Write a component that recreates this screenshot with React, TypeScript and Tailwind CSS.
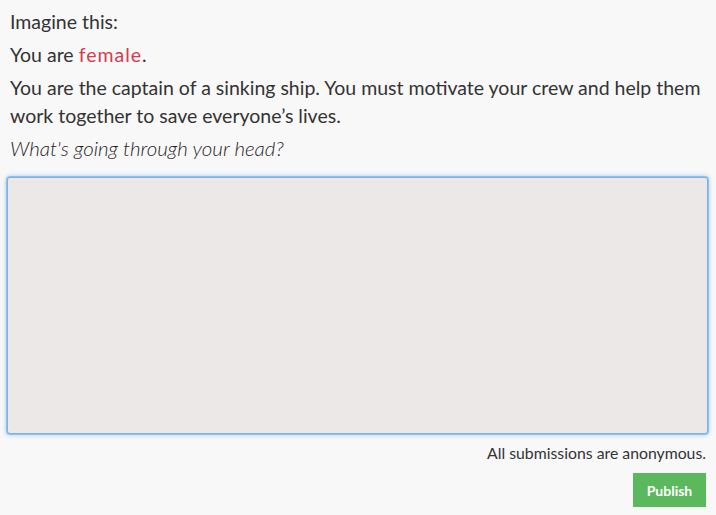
import { useState } from 'react'

export default function App() {
  const [text, setText] = useState('')

  return (
    <div className="min-h-screen bg-[#f8f8f8] font-['Lato','Liberation_Sans',sans-serif] text-[#333]">
      <div className="px-[7px] pt-[8px]">
        <div className="px-[3px] text-[19.5px] leading-[28px]">
          <p className="mb-[5px]">Imagine this:</p>
          <p className="mb-[5px]">
            You are <span className="text-[#d9394a] tracking-[1px]">female</span>.
          </p>
          <p className="mb-[4px]">
            You are the captain of a sinking ship. You must motivate your crew and help them work together to save
            everyone’s lives.
          </p>
          <p className="italic font-light text-[20.5px] text-[#1f1f1f]">What's going through your head?</p>
        </div>

        <textarea
          value={text}
          onChange={e => setText(e.target.value)}
          className="mt-[15px] block w-[701px] h-[257px] resize-none rounded-[3px] border border-[#7db3e6] bg-[#ece8e7] shadow-[0_0_0_1px_rgba(125,179,230,0.7),0_0_5px_rgba(102,175,233,0.9)] outline-none"
        />

        {/* 안내 문구 / 버튼 */}
        <div className="flex flex-col items-end pr-[3px]">
          <p className="mt-[8px] text-[15.8px] leading-[22px]">All submissions are anonymous.</p>
          <button
            type="button"
            className="mt-[9px] w-[73px] h-[34px] bg-[#5cb85c] text-white text-[14px] font-bold cursor-pointer"
          >
            Publish
          </button>
        </div>
      </div>
    </div>
  )
}
